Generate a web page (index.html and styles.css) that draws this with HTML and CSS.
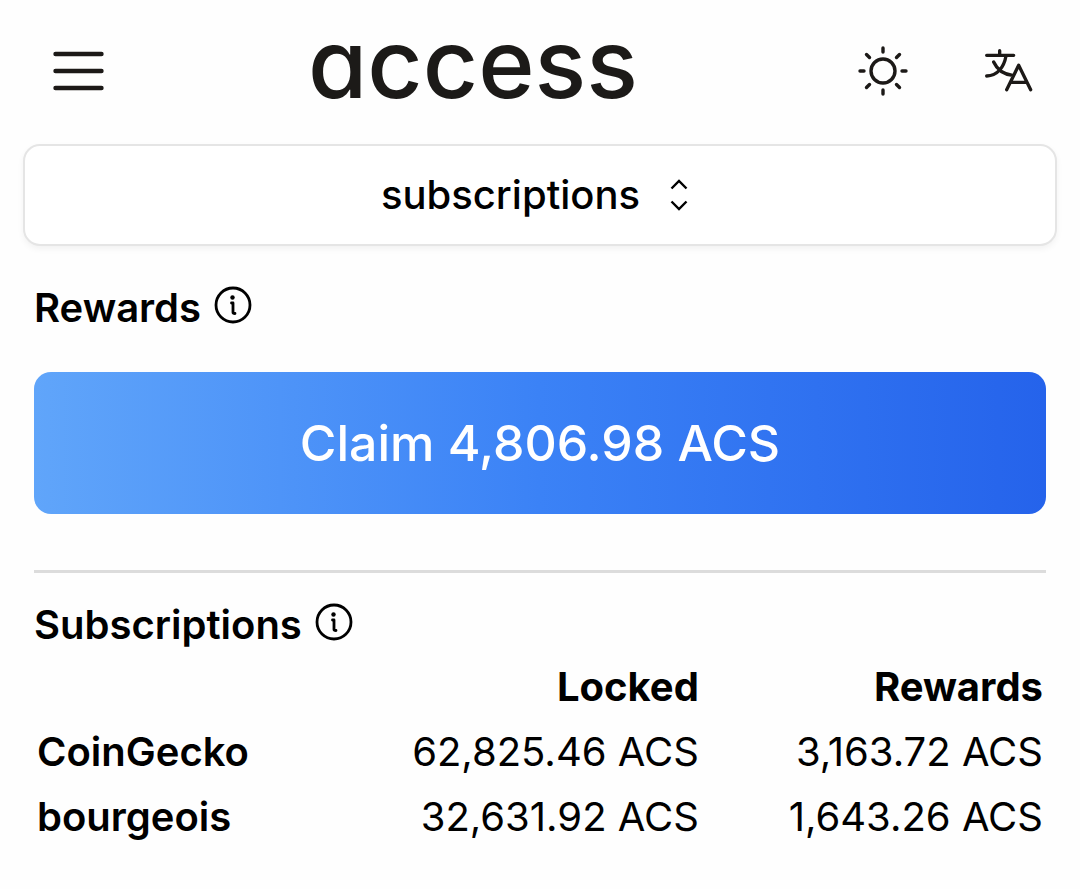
FILE: index.html
```html
<!DOCTYPE html>
<html lang="en">
<head>
<meta charset="utf-8">
<meta name="viewport" content="width=device-width, initial-scale=1">
<title>access</title>
<link rel="stylesheet" href="styles.css">
</head>
<body>
<header class="topbar">
  <button class="icon-button" type="button" aria-label="Menu">
    <svg class="icon" viewBox="0 0 68 68" stroke-width="4.4"><path d="M10.500 17h46M10.500 34h46M10.500 51h46"/></svg>
  </button>
  <a class="logo" href="#">access</a>
  <div class="actions">
    <button class="icon-button" type="button" aria-label="Toggle theme">
      <svg class="icon" viewBox="-34 -34 68 68" stroke-width="3.4"><circle r="12"/><path d="M0-23v4M0 23v-4M-23 0h4M23 0h-4M-16.500-16.500l3 3M16.500-16.500l-3 3M-16.500 16.500l3-3M16.500 16.500l-3-3"/></svg>
    </button>
    <button class="icon-button" type="button" aria-label="Language">
      <svg class="icon" viewBox="403 22 204 204" stroke-width="10"><path d="M480 63v14M441 77h81M499 79C493 112 474 138 441 139M462 97C472 119 492 134 519 137M501 180L537 107L573 180M512 158H562"/></svg>
    </button>
  </div>
</header>
<main>
  <button class="picker" type="button" aria-haspopup="listbox">
    <span>subscriptions</span>
    <svg class="picker-icon" viewBox="0 0 56 56" stroke-width="2.4"><path d="M20.500 21.500L28 14l7.500 7.500M20.500 34.500L28 42l7.500-7.500"/></svg>
  </button>
  <div class="content">
    <section class="rewards">
      <h2 class="heading">Rewards
        <svg class="info" viewBox="-25 -25 50 50" stroke-width="2.8"><circle r="17"/><path d="M-1.500-2H0V7.500Q0 8.500 2 8.500"/><circle class="dot" cx="-.5" cy="-7.500" r="2.200"/></svg>
      </h2>
      <button class="claim" type="button">Claim 4,806.98 ACS</button>
    </section>
    <section class="subscriptions">
      <h2 class="heading">Subscriptions
        <svg class="info" viewBox="-25 -25 50 50" stroke-width="2.8"><circle r="17"/><path d="M-1.500-2H0V7.500Q0 8.500 2 8.500"/><circle class="dot" cx="-.5" cy="-7.500" r="2.200"/></svg>
      </h2>
      <table class="pools">
        <colgroup><col class="pool-name"><col class="pool-locked"><col class="pool-rewards"></colgroup>
        <thead>
          <tr><td></td><th scope="col">Locked</th><th scope="col">Rewards</th></tr>
        </thead>
        <tbody>
          <tr><th scope="row">CoinGecko</th><td>62,825.46 ACS</td><td>3,163.72 ACS</td></tr>
          <tr><th scope="row">bourgeois</th><td>32,631.92 ACS</td><td>1,643.26 ACS</td></tr>
        </tbody>
      </table>
    </section>
  </div>
</main>
</body>
</html>
```
FILE: styles.css
```css
* {
  box-sizing: border-box;
}

body {
  margin: 0;
  background: #fefefe;
  color: #000;
  font: 400 40px/56px Inter, "Liberation Sans", sans-serif;
}

button {
  padding: 0;
  border: 0;
  background: none;
  color: inherit;
  font: inherit;
  cursor: pointer;
}

svg {
  display: block;
  flex: none;
  fill: none;
  stroke: currentColor;
  stroke-linecap: round;
  stroke-linejoin: round;
}

.topbar {
  display: flex;
  align-items: center;
  justify-content: space-between;
  padding: 16px 38px 18px 45px;
  color: #1c1917;
}

.icon {
  width: 68px;
  height: 68px;
}

.logo {
  margin-right: 16px;
  padding-bottom: 16px;
  color: #1c1a18;
  font-size: 96px;
  font-weight: 500;
  font-feature-settings: "cv11";
  line-height: 94px;
  text-decoration: none;
}

.actions {
  display: flex;
  gap: 57px;
}

main {
  padding: 0 23px;
}

.picker {
  display: flex;
  align-items: center;
  justify-content: center;
  gap: 11px;
  width: 100%;
  padding: 21px 0 21px 8px;
  border: 2px solid #e5e5e5;
  border-radius: 17px;
  background: #fff;
  box-shadow: 0 3px 6px rgba(0, 0, 0, 0.05);
  font-weight: 500;
}

.picker-icon {
  width: 56px;
  height: 56px;
  stroke-linecap: butt;
  stroke-linejoin: miter;
}

.content {
  padding: 34px 11px;
}

.heading {
  display: flex;
  align-items: flex-start;
  gap: 7px;
  margin: 0;
  font-size: 40px;
  font-weight: 600;
}

.info {
  width: 50px;
  height: 50px;
}

.dot {
  fill: currentColor;
  stroke: none;
}

.rewards {
  padding-bottom: 56px;
  border-bottom: 3px solid #dcdcdc;
}

.claim {
  display: block;
  width: 100%;
  margin-top: 36px;
  padding: 36px;
  border-radius: 17px;
  background: linear-gradient(to right, #60a5fa, #3b82f6, #2563eb);
  color: #fff;
  font-size: 50px;
  font-weight: 500;
  line-height: 70px;
}

.subscriptions {
  padding-top: 24px;
}

.pools {
  width: 100%;
  margin-top: 1px;
  border-collapse: collapse;
  table-layout: fixed;
}

.pool-name,
.pool-locked {
  width: 33%;
}

.pool-rewards {
  width: 34%;
}

.pools th,
.pools td {
  padding: 3px;
  line-height: 59px;
  text-align: right;
}

.pools th {
  font-weight: 700;
}

.pools tbody th {
  font-weight: 600;
  text-align: left;
}
```
